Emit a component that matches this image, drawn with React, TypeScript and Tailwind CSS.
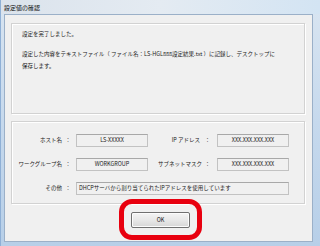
import React from 'react';

const jp = { fontFamily: '"Noto Sans CJK JP", "Noto Sans", sans-serif' };

const Field: React.FC<{ value: string; className?: string; left?: boolean }> = ({ value, className = '', left }) => (
  <div
    className={`h-[13px] flex items-center border border-[#c2c2c2] border-t-[#a8a8a8] bg-[#f0f0f0] text-[5.5px] text-[#1a1a1a] ${
      left ? 'justify-start pl-[2px]' : 'justify-center'
    } ${className}`}
  >
    {value}
  </div>
);

export default function App() {
  return (
    <div
      className="w-[320px] h-[246px] flex flex-col bg-gradient-to-b from-[#d9e5f1] via-[#c6d9ed] to-[#b7cfe8] border-l border-[#8fb0d6] overflow-hidden"
      style={jp}
    >
      {/* title bar */}
      <div className="h-[14px] shrink-0 flex items-center pl-[3px] text-[6px] text-[#111] bg-gradient-to-r from-[#dbe3ec] via-[#e4ebf2] to-[#d3e4f3]">
        設定値の確認
      </div>

      {/* client area */}
      <div className="flex-1 ml-[3px] mr-[7px] mb-[4px] bg-[#f0f0f0] border border-[#9bb0c8] flex flex-col pl-[6px] pt-[8px]">
        {/* message panel */}
        <div className="w-[294px] h-[91px] border border-[#d2d2d2] shadow-[inset_1px_1px_0_#fff,1px_1px_0_#fff] pl-[10px] pt-[4px] text-[5.5px] leading-[12px] text-[#1a1a1a]">
          <div>設定を完了しました。</div>
          <div className="mt-[8px]">
            設定した内容をテキストファイル（ ファイル名：LS-HGL888設定結果.txt ）に記録し、デスクトップに
          </div>
          <div>保存します。</div>
        </div>

        {/* settings panel */}
        <div className="mt-[7px] w-[294px] h-[83px] border border-[#d2d2d2] shadow-[inset_1px_1px_0_#fff,1px_1px_0_#fff] flex flex-col gap-[11px] pt-[12px] text-[5.5px] text-[#1a1a1a]">
          <div className="flex items-center">
            <div className="w-[50px] text-right">ホスト名</div>
            <div className="w-[12px] text-center">：</div>
            <Field value="LS-XXXXX" className="ml-[2px] w-[72px]" />
            <div className="ml-[10px] w-[42px] text-right">IP アドレス</div>
            <div className="w-[15px] text-center">：</div>
            <Field value="XXX.XXX.XXX.XXX" className="ml-[2px] w-[72px]" />
          </div>
          <div className="flex items-center">
            <div className="w-[50px] text-right whitespace-nowrap">ワークグループ名</div>
            <div className="w-[12px] text-center">：</div>
            <Field value="WORKGROUP" className="ml-[2px] w-[72px]" />
            <div className="ml-[10px] w-[42px] text-right whitespace-nowrap">サブネットマスク</div>
            <div className="w-[15px] text-center">：</div>
            <Field value="XXX.XXX.XXX.XXX" className="ml-[2px] w-[72px]" />
          </div>
          <div className="flex items-center">
            <div className="w-[50px] text-right">その他</div>
            <div className="w-[12px] text-center">：</div>
            <Field value="DHCPサーバから割り当てられたIPアドレスを使用しています" left className="ml-[2px] w-[213px] h-[12px]" />
          </div>
        </div>

        {/* button */}
        <div className="mt-[8px] pl-[120px]">
          <div className="relative w-[59px] h-[16px]">
            <button className="w-full h-full rounded-[2px] border border-[#707070] bg-gradient-to-b from-[#f4f4f4] via-[#e8e8e8] to-[#d6d6d6] shadow-[inset_0_0_0_1px_#fcfcfc] text-[5.5px] text-[#111] flex items-center justify-center">
              OK
            </button>
            <div className="absolute -left-[12px] -right-[12px] -top-[13px] -bottom-[12px] border-[5px] border-[#e8000f] rounded-[13px] pointer-events-none" />
          </div>
        </div>
      </div>
    </div>
  );
}
